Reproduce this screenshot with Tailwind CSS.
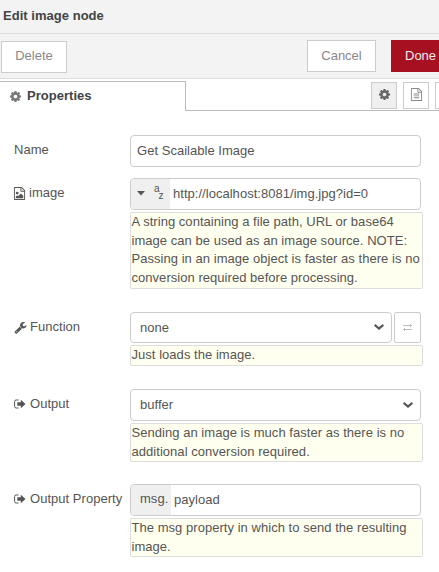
<!DOCTYPE html>
<html lang="en">
<head>
<meta charset="utf-8">
<title>Edit image node</title>
<script src="https://cdn.jsdelivr.net/npm/@tailwindcss/browser@4"></script>
</head>
<body class="w-[439px] h-[572px] overflow-hidden bg-white font-['Liberation_Sans',Arial,sans-serif] text-[13px] leading-[18.57px] text-[#555]">
<svg class="hidden">
  <symbol id="cog" viewBox="0 0 1792 1792"><path d="M1152 896q0-106-75-181t-181-75-181 75-75 181 75 181 181 75 181-75 75-181zm512-109v222q0 12-8 23t-20 13l-185 28q-19 54-39 91 35 50 107 138 10 12 10 25t-9 23q-27 37-99 108t-94 71q-12 0-26-9l-138-108q-44 23-91 38-16 136-29 186-7 28-36 28h-222q-14 0-24.500-8.500t-11.500-21.500l-28-184q-49-16-90-37l-141 107q-10 9-25 9-14 0-25-11-126-114-165-168-7-10-7-23 0-12 8-23 15-21 51-66.500t54-70.500q-27-50-41-99l-183-27q-13-2-21-12.500t-8-23.500v-222q0-12 8-23t19-13l186-28q14-46 39-92-40-57-107-138-10-12-10-24 0-10 9-23 26-36 98.500-107.500t94.500-71.500q13 0 26 10l138 107q44-23 91-38 16-136 29-186 7-28 36-28h222q14 0 24.500 8.500t11.500 21.500l28 184q49 16 90 37l142-107q9-9 24-9 13 0 25 10 129 119 165 170 7 8 7 22 0 12-8 23-15 21-51 66.500t-54 70.500q26 50 41 98l183 28q13 2 21 12.500t8 23.500z"/></symbol>
  <symbol id="doc" viewBox="0 0 1792 1792"><path d="M1596 380q28 28 48 76t20 88v1152q0 40-28 68t-68 28h-1344q-40 0-68-28t-28-68v-1600q0-40 28-68t68-28h896q40 0 88 20t76 48zm-444-244v376h376q-10-29-22-41l-313-313q-12-12-41-22zm384 1528v-1024h-416q-40 0-68-28t-28-68v-416h-768v1536h1280zm-1024-864q0-14 9-23t23-9h704q14 0 23 9t9 23v64q0 14-9 23t-23 9h-704q-14 0-23-9t-9-23v-64zm736 224q14 0 23 9t9 23v64q0 14-9 23t-23 9h-704q-14 0-23-9t-9-23v-64q0-14 9-23t23-9h704zm0 256q14 0 23 9t9 23v64q0 14-9 23t-23 9h-704q-14 0-23-9t-9-23v-64q0-14 9-23t23-9h704z"/></symbol>
  <symbol id="img" viewBox="0 0 1792 1792"><path d="M1596 380q28 28 48 76t20 88v1152q0 40-28 68t-68 28h-1344q-40 0-68-28t-28-68v-1600q0-40 28-68t68-28h896q40 0 88 20t76 48zm-444-244v376h376q-10-29-22-41l-313-313q-12-12-41-22zm384 1528v-1024h-416q-40 0-68-28t-28-68v-416h-768v1536h1280zm-128-448v320h-1024v-192l192-192 128 128 384-384zm-832-192q-80 0-136-56t-56-136 56-136 136-56 136 56 56 136-56 136-136 56z"/></symbol>
  <symbol id="wrench" viewBox="0 0 1792 1792"><path d="M448 1472q0-26-19-45t-45-19-45 19-19 45 19 45 45 19 45-19 19-45zm644-420l-682 682q-37 37-90 37-52 0-91-37l-106-108q-38-36-38-90 0-53 38-91l681-681q39 98 114.500 173.500t173.500 114.500zm634-435q0 39-23 106-47 134-164.500 217.500t-258.500 83.500q-185 0-316.500-131.500t-131.500-316.500 131.500-316.500 316.500-131.500q58 0 121.500 16.500t107.500 46.500q16 11 16 28t-16 28l-293 169v224l193 107q5-3 79-48.500t135.500-81 70.500-35.500q15 0 23.500 10t8.500 25z"/></symbol>
  <symbol id="out" viewBox="0 0 12 10"><path d="M4.500 1H2.200Q.6 1 .6 2.600v4.800Q.6 9 2.200 9h2.300" fill="none" stroke="currentColor" stroke-width="1"/><path d="M3.300 3.300h3.500V.8L11.500 5 6.800 9.200V6.700H3.300z"/></symbol>
  <symbol id="chev" viewBox="0 0 10 6"><path d="M.6.900 5 4.500 9.400.9" fill="none" stroke="currentColor" stroke-width="2.200"/></symbol>
</svg>

<header class="h-[34px] bg-[#f3f3f3] border-b border-[#ddd] pl-[3px] pt-[7px] font-bold text-[#444] tracking-[0.03px]">Edit image node</header>

<div class="h-[45px] bg-[#f3f3f3] border-b border-[#ddd] flex items-start pl-px pt-[6px] text-[#888] leading-[29px] text-center overflow-hidden">
  <div class="mt-px w-[66px] h-[32px] shrink-0 border border-[#ccc] bg-white leading-[27px]">Delete</div>
  <div class="ml-[240px] w-[69px] h-[32px] shrink-0 border border-[#ccc] bg-white">Cancel</div>
  <div class="ml-[15px] flex-1 h-[32px] border-y border-l border-[#a8111f] bg-[#a61021] text-[#eee] text-left pl-[13px]">Done</div>
</div>

<div class="h-[32px] pt-[2px] flex items-start overflow-hidden">
  <div class="w-[186px] h-[30px] shrink-0 border-t border-r border-[#bbb] flex items-center pl-[9px] font-bold text-[#444] tracking-[0.03px]">
    <svg class="w-[13px] h-[13px] mr-[5px] -mt-px fill-[#777]"><use href="#cog"/></svg>Properties
  </div>
  <div class="flex-1 min-w-0 h-[30px] border-b border-[#bbb] flex items-start pl-[185px] pt-px gap-[6px]">
    <div class="w-[26px] h-[27px] shrink-0 border border-[#ccc] bg-[#efefef] flex items-center justify-center"><svg class="w-[13px] h-[13px] -mt-[2px] fill-[#666]"><use href="#cog"/></svg></div>
    <div class="w-[26px] h-[27px] shrink-0 border border-[#ccc] flex items-center justify-center"><svg class="w-[13px] h-[13px] -mt-[2px] fill-[#888]"><use href="#doc"/></svg></div>
    <div class="flex-1 h-[27px] border-y border-l border-[#ccc]"></div>
  </div>
</div>

<main class="pl-[14px] pt-[24px] tracking-[0.03px]">
  <div class="flex">
    <label class="w-[116px] shrink-0 pt-[6px]">Name</label>
    <div class="w-[291px] h-[32px] border border-[#ccc] rounded-[4px] pl-[6px] leading-[30px]">Get Scailable Image</div>
  </div>

  <div class="flex mt-[11px]">
    <label class="w-[116px] h-[31px] shrink-0 flex items-center"><svg class="w-[13px] h-[13px] mr-[3px] -ml-[1px] -mt-px fill-current"><use href="#img"/></svg><span>image</span></label>
    <div class="w-[293px]">
      <div class="w-[291px] h-[32px] border border-[#ccc] rounded-[4px] flex overflow-hidden leading-[30px]">
        <div class="w-[39px] bg-[#efefef] flex items-center pl-[6px]">
          <svg class="w-[8px] h-[5px] -mt-px fill-current" viewBox="0 0 8 5"><path d="M0 0h8L4 4.600z"/></svg>
          <div class="ml-[9px] flex text-[10px] leading-[10px]"><span class="-mt-[3px]">a</span><span class="mt-[4px] -ml-[1px]">z</span></div>
        </div>
        <div class="pl-[3px]">http://localhost:8081/img.jpg?id=0</div>
      </div>
      <div class="mt-[2px] h-[77px] border border-[#ddd] bg-[#ffffef] rounded-[2px] pl-[0.500px] whitespace-nowrap tracking-[0.04px]">A string containing a file path, URL or base64<br>image can be used as an image source. NOTE:<br>Passing in an image object is faster as there is no<br>conversion required before processing.</div>
    </div>
  </div>

  <div class="flex mt-[23px]">
    <label class="w-[116px] h-[31px] shrink-0 flex items-center"><svg class="w-[13px] h-[13px] mr-[3px] -mt-px fill-current"><use href="#wrench"/></svg><span>Function</span></label>
    <div class="w-[293px]">
      <div class="flex gap-[2px]">
        <div class="w-[262px] h-[31px] border border-[#ccc] rounded-[4px] pl-[9px] pr-[7px] flex items-center justify-between"><span class="pt-px">none</span><svg class="w-[10px] h-[6px] -mt-px"><use href="#chev"/></svg></div>
        <div class="w-[27px] h-[31px] border border-[#ccc] rounded-[2px] flex items-center justify-center"><svg class="w-[9px] h-[7px] fill-none stroke-[#bbb]" viewBox="0 0 9 7"><path d="M0 1.500h8.500M7 0l1.500 1.500L7 3M9 5.500H.5M2 4 .5 5.500 2 7"/></svg></div>
      </div>
      <div class="mt-[2px] h-[21px] border border-[#ddd] bg-[#ffffef] rounded-[2px] pl-[0.500px] tracking-[0.04px]">Just loads the image.</div>
    </div>
  </div>

  <div class="flex mt-[23px]">
    <label class="w-[116px] h-[31px] shrink-0 flex items-center"><svg class="w-[12px] h-[10px] mr-[4px] -mt-px fill-current"><use href="#out"/></svg><span>Output</span></label>
    <div class="w-[293px]">
      <div class="w-[291px] h-[32px] border border-[#ccc] rounded-[4px] pl-[9px] pr-[7px] flex items-center justify-between">buffer<svg class="w-[10px] h-[6px]"><use href="#chev"/></svg></div>
      <div class="mt-[2px] h-[39px] border border-[#ddd] bg-[#ffffef] rounded-[2px] pl-[0.500px] whitespace-nowrap tracking-[0.04px]">Sending an image is much faster as there is no<br>additional conversion required.</div>
    </div>
  </div>

  <div class="flex mt-[22px]">
    <label class="w-[116px] h-[31px] shrink-0 flex items-center whitespace-nowrap"><svg class="w-[12px] h-[10px] mr-[4px] -mt-px fill-current"><use href="#out"/></svg><span>Output Property</span></label>
    <div class="w-[293px]">
      <div class="w-[291px] h-[32px] border border-[#ccc] rounded-[4px] flex overflow-hidden leading-[30px]">
        <div class="w-[40px] bg-[#efefef] pl-[9px] leading-[28px]">msg.</div>
        <div class="pl-[3px]">payload</div>
      </div>
      <div class="mt-[2px] h-[39px] border border-[#ddd] bg-[#ffffef] rounded-[2px] pl-[0.500px] whitespace-nowrap tracking-[0.04px]">The msg property in which to send the resulting<br>image.</div>
    </div>
  </div>
</main>
</body>
</html>
